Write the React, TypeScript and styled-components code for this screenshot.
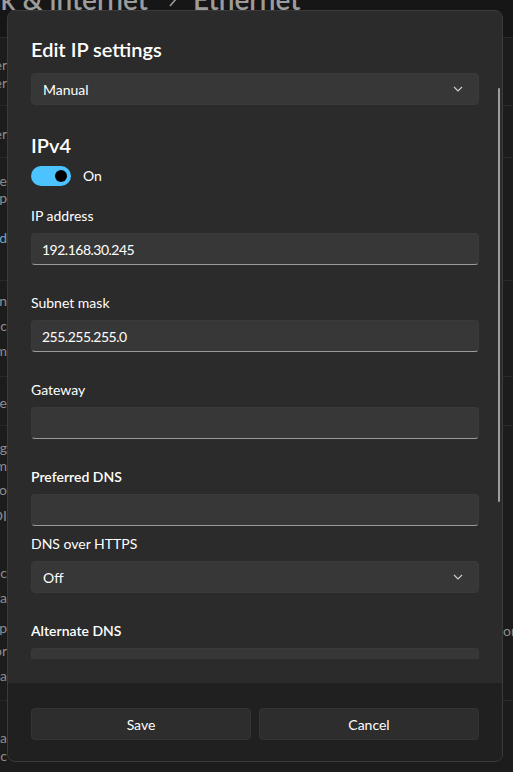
import styled, { createGlobalStyle } from 'styled-components'

const GlobalStyle = createGlobalStyle`
  html, body {
    margin: 0;
    padding: 0;
    background: #1b1b1b;
  }
  body {
    font-family: 'Segoe UI', Lato, 'Noto Sans', sans-serif;
    -webkit-font-smoothing: antialiased;
  }
  * { box-sizing: border-box; }
`;

const Page = styled.div`
  position: relative;
  width: 513px;
  height: 772px;
  overflow: hidden;
  background: #1c1c1c;
  display: flex;
  flex-direction: column;
`;

const Header = styled.div`
  height: 37px;
  flex: none;
  background: #161616;
  overflow: hidden;
`;

const Crumbs = styled.div`
  display: flex;
  align-items: center;
  margin-top: -19px;
  height: 36px;
  font-size: 28px;
  line-height: 36px;
  font-weight: 600;
  color: #9c9c9c;
  white-space: nowrap;
`;

const CrumbClip = styled.div`
  width: 148px;
  flex: none;
  display: flex;
  justify-content: flex-end;
  overflow: hidden;
`;

const CrumbSep = styled.div`
  width: 45px;
  flex: none;
  display: flex;
  justify-content: center;
  padding-left: 4px;
`;

const BgRow = styled.div<{ $h: number }>`
  height: ${(p) => p.$h}px;
  flex: none;
  display: grid;
  grid-template-columns: 7px 1fr 10px;
  border-top: 1px solid #2a2a2a;
`;

const FragCol = styled.div<{ $align: 'left' | 'right' }>`
  display: flex;
  flex-direction: column;
  align-items: ${(p) => (p.$align === 'right' ? 'flex-end' : 'flex-start')};
  overflow: hidden;
`;

const Frag = styled.span<{ $mt: number; $link?: boolean }>`
  margin-top: ${(p) => p.$mt}px;
  height: 18px;
  line-height: 18px;
  font-size: 14px;
  white-space: nowrap;
  color: ${(p) => (p.$link ? '#6aa6c4' : '#8e8e8e')};
`;

const Dialog = styled.div`
  position: absolute;
  left: 7px;
  top: 10px;
  width: 496px;
  height: 752px;
  background: #2b2b2b;
  border: 1px solid #3b3b3b;
  border-radius: 8px;
  overflow: hidden;
  display: flex;
  flex-direction: column;
  color: #ffffff;
`;

const Body = styled.div`
  flex: 1;
  display: flex;
  flex-direction: column;
  padding: 24px 23px;
  min-height: 0;
`;

const Viewport = styled.div`
  flex: 1;
  overflow: hidden;
  display: flex;
  flex-direction: column;
`;

const Thumb = styled.div`
  position: absolute;
  top: 77px;
  right: 2px;
  width: 2px;
  height: 414px;
  border-radius: 1px;
  background: #9e9e9e;
`;

const Title = styled.h1`
  margin: 0;
  font-size: 20px;
  line-height: 28px;
  font-weight: 600;
`;

const SectionTitle = styled.h2`
  margin: 26px 0 0;
  font-size: 20px;
  line-height: 28px;
  font-weight: 600;
`;

const Select = styled.div<{ $mt: number }>`
  margin-top: ${(p) => p.$mt}px;
  height: 32px;
  flex: none;
  display: flex;
  align-items: center;
  justify-content: space-between;
  padding: 0 15px 0 11px;
  background: #373737;
  border: 1px solid #3a3a3a;
  border-radius: 4px;
  font-size: 14px;
`;

const Input = styled.div`
  margin-top: 7px;
  height: 32px;
  flex: none;
  display: flex;
  align-items: center;
  padding: 0 10px;
  background: #373737;
  border: 1px solid #3a3a3a;
  border-bottom: 1px solid #9a9a9a;
  border-radius: 4px;
  font-size: 14px;
  letter-spacing: -0.5px;
`;

const ToggleRow = styled.div`
  margin-top: 7px;
  display: flex;
  align-items: center;
  gap: 12px;
  font-size: 14px;
  line-height: 20px;
`;

const Track = styled.div`
  width: 40px;
  height: 20px;
  border-radius: 10px;
  background: #4cc2ff;
  display: flex;
  align-items: center;
  justify-content: flex-end;
  padding-right: 4px;
`;

const Knob = styled.div`
  width: 12px;
  height: 12px;
  border-radius: 50%;
  background: #000;
`;

const Label = styled.div<{ $mt: number; $bold?: boolean }>`
  margin-top: ${(p) => p.$mt}px;
  font-size: 14px;
  line-height: 20px;
  font-weight: ${(p) => (p.$bold ? 600 : 400)};
`;

const Footer = styled.div`
  height: 78px;
  flex: none;
  background: #202020;
  padding: 25px 23px 0;
  display: grid;
  grid-template-columns: 1fr 1fr;
  gap: 8px;
  align-items: start;
`;

const Button = styled.button`
  height: 32px;
  border-radius: 4px;
  border: 1px solid #343434;
  background: #2d2d2d;
  color: #fff;
  font-family: inherit;
  font-size: 14px;
`;

const Chevron = () => (
  <svg width="10" height="6" viewBox="0 0 10 6" fill="none">
    <path d="M1 1l4 4 4-4" stroke="#d0d0d0" strokeWidth="1.1" />
  </svg>
);

const CrumbChevron = () => (
  <svg width="8" height="16" viewBox="0 0 8 16" fill="none">
    <path d="M1 1l6 7-6 7" stroke="#9c9c9c" strokeWidth="1.6" />
  </svg>
);

type Line = [number, string, boolean?];
interface BgRowData {
  h: number;
  left: Line[];
  right: Line[];
}

// y values are line centres, measured from the row top
const rows: BgRowData[] = [
  { h: 68, left: [[27, 'Authentication settings, Manager'], [45, 'Metered connection, Provider']], right: [] },
  { h: 52, left: [[28, 'Data usage for this adapter']], right: [] },
  { h: 123, left: [[23, 'IP assignment, Configure'], [40, 'DNS server assignment, Map'], [80, 'Add', true]], right: [] },
  { h: 96, left: [[20, 'Configuration, Assign'], [45, 'Link speed, Produc'], [70, 'IPv6 address, Item']], right: [] },
  { h: 49, left: [[26, 'Properties, Use']], right: [] },
  {
    h: 275,
    left: [
      [22, 'Link-local IPv6 address, Reg'],
      [40, 'IPv4 address, Item'],
      [64, 'IPv4 DNS servers, Info'],
      [90, 'Primary DNS suffix, OI'],
      [147, 'Manufacturer, Sync'],
      [172, 'Description, Interfa'],
      [202, 'Driver version, Chip'],
      [225, 'Physical address (MAC), For'],
      [250, 'Copy, Physical address, Replica'],
    ],
    right: [[205, 'or more']],
  },
  { h: 72, left: [[37, 'Related settings, Replica'], [55, 'More options, Bc']], right: [] },
];

const renderFrags = (lines: Line[]) => {
  let cursor = 0;
  return lines.map(([y, text, link], i) => {
    const mt = y - 9 - cursor;
    cursor = y + 9;
    return (
      <Frag key={i} $mt={mt} $link={link}>
        {text}
      </Frag>
    );
  });
};

const Field = ({ label, value, mt, bold }: { label: string; value?: string; mt: number; bold?: boolean }) => (
  <>
    <Label $mt={mt} $bold={bold}>
      {label}
    </Label>
    <Input>{value}</Input>
  </>
);

export default function App() {
  return (
    <Page>
      <GlobalStyle />
      <Header>
        <Crumbs>
          <CrumbClip>Network &amp; internet</CrumbClip>
          <CrumbSep>
            <CrumbChevron />
          </CrumbSep>
          <span>Ethernet</span>
        </Crumbs>
      </Header>
      {rows.map((r, i) => (
        <BgRow key={i} $h={r.h}>
          <FragCol $align="right">{renderFrags(r.left)}</FragCol>
          <div />
          <FragCol $align="left">{renderFrags(r.right)}</FragCol>
        </BgRow>
      ))}

      <Dialog>
        <Body>
          <Viewport>
            <Title>Edit IP settings</Title>
            <Select $mt={10}>
              <span>Manual</span>
              <Chevron />
            </Select>

            <SectionTitle>IPv4</SectionTitle>
            <ToggleRow>
              <Track>
                <Knob />
              </Track>
              <span>On</span>
            </ToggleRow>

            <Field label="IP address" value="192.168.30.245" mt={20} />
            <Field label="Subnet mask" value="255.255.255.0" mt={28} />
            <Field label="Gateway" mt={28} />
            <Field label="Preferred DNS" mt={28} bold />
            <Label $mt={8}>DNS over HTTPS</Label>
            <Select $mt={7}>
              <span>Off</span>
              <Chevron />
            </Select>
            <Field label="Alternate DNS" mt={28} bold />
          </Viewport>
        </Body>
        <Footer>
          <Button>Save</Button>
          <Button>Cancel</Button>
        </Footer>
        <Thumb />
      </Dialog>
    </Page>
  );
}
